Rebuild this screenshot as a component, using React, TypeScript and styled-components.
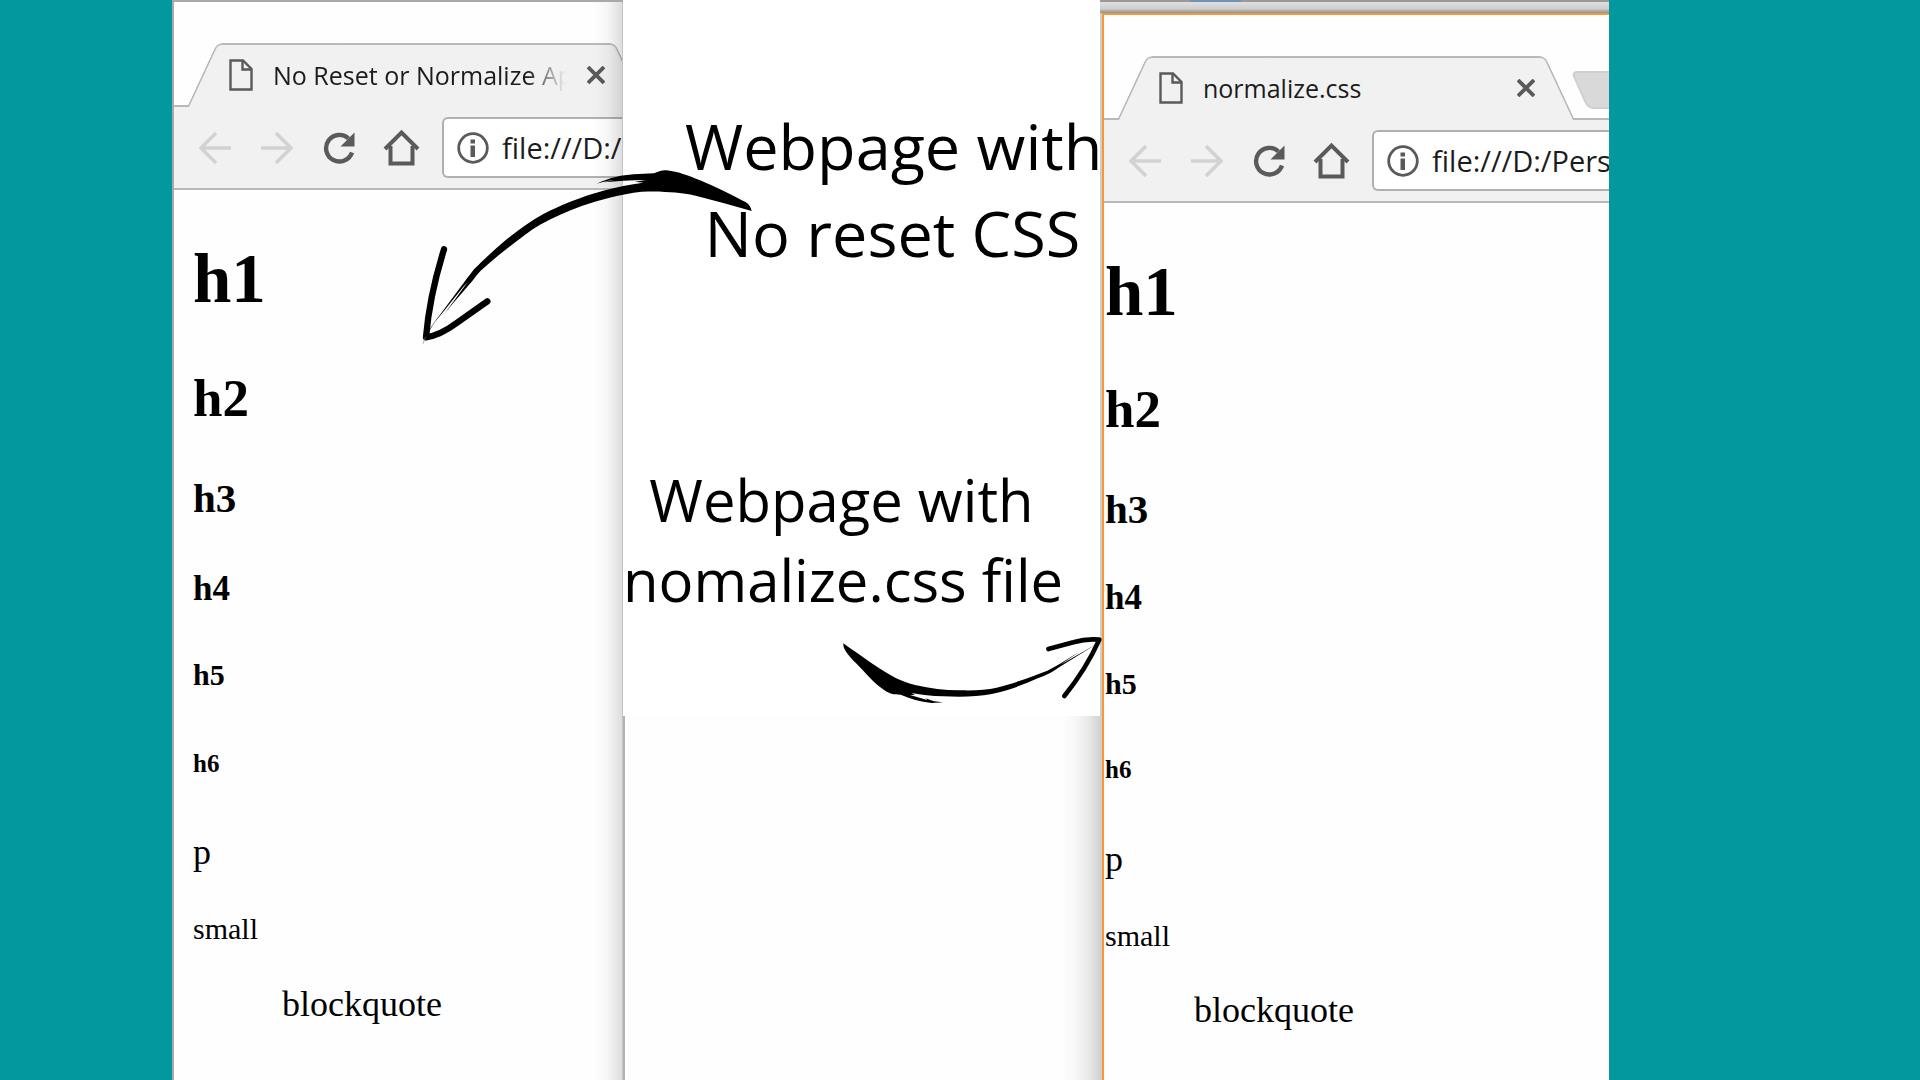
import React from 'react';
import styled, { createGlobalStyle } from 'styled-components';

const GlobalStyle = createGlobalStyle`
  *, *::before, *::after { box-sizing: border-box; }
  body { margin: 0; background: #03989e; }
`;

const uiFont = `'Open Sans', 'Noto Sans', sans-serif`;
const pageFont = `'Liberation Serif', 'Times New Roman', serif`;

const Stage = styled.main`
  display: grid;
  grid-template-columns:
    minmax(0, 172fr) minmax(0, 451fr) minmax(0, 477fr)
    minmax(0, 509fr) minmax(0, 311fr);
  min-height: 100vh;
  background: #03989e;
`;

const LeftPane = styled.section`
  grid-column: 2;
  position: relative;
  display: flex;
  overflow: hidden;
  &::after {
    content: '';
    position: absolute;
    inset: 2px 0 0 auto;
    width: 30px;
    border-right: 1px solid #c4c4c4;
    background: linear-gradient(to right, rgba(0, 0, 0, 0), rgba(0, 0, 0, 0.03) 50%, rgba(0, 0, 0, 0.13));
    pointer-events: none;
  }
`;

const MiddlePane = styled.section`
  grid-column: 3;
  position: relative;
  z-index: 1;
  display: flex;
  flex-direction: column;
`;

const RightPane = styled.section`
  grid-column: 4;
  display: flex;
  flex-direction: column;
  overflow: hidden;
  background: #cdcfd1;
`;

const BackEdge = styled.div`
  height: 13px;
  border-top: 2px solid #999;
  border-image: linear-gradient(to right, #999 91px, #6f93b5 91px, #6f93b5 142px, #999 142px) 2;
  background: linear-gradient(#e0e0e0, #cfcfcf 60%, #8f8f8f);
`;

const FrameHolder = styled.div`
  flex: 1;
  display: flex;
  padding-left: 2px;
`;

const Frame = styled.article<{ $edge: string }>`
  flex: 1;
  min-width: 0;
  overflow: hidden;
  background: #fefefe;
  border: 2px solid ${(p) => p.$edge};
  border-width: 2px 0 0 2px;
`;

const TabStrip = styled.div`
  display: flex;
  height: 105px;
  padding: 41px 0 0 13px;
  border-bottom: 2px solid #b9b9b9;
`;

const Tab = styled.div`
  flex: none;
  position: relative;
  z-index: 0;
  display: flex;
  align-items: center;
  width: 458px;
  height: 64px;
  padding: 0 40px 0 42px;
  &::before,
  &::after {
    content: '';
    position: absolute;
    z-index: -1;
    top: 0;
    bottom: 0;
    background: #f1f1f1;
    border: 2px solid #b9b9b9;
    border-bottom: 0;
  }
  &::before {
    left: 0;
    right: 40%;
    border-right: 0;
    border-top-left-radius: 6px;
    transform: skewX(-25deg);
    transform-origin: bottom left;
  }
  &::after {
    left: 40%;
    right: 0;
    border-left: 0;
    border-top-right-radius: 6px;
    transform: skewX(25deg);
    transform-origin: bottom right;
  }
`;

const TabTitle = styled.span<{ $fade: boolean }>`
  flex: 1;
  min-width: 0;
  margin: 0 20px;
  overflow: hidden;
  white-space: nowrap;
  font: 25px/32px ${uiFont};
  color: #1c1c1c;
  ${(p) => p.$fade && 'mask-image: linear-gradient(to right, #000 255px, rgba(0, 0, 0, 0.1) 288px, transparent 294px);'}
`;

const IconButton = styled.button`
  display: flex;
  padding: 0;
  border: 0;
  background: none;
  color: #5a5a5a;
  &:disabled { color: #d2d2d2; }
`;

const NewTab = styled.button`
  flex: none;
  width: 70px;
  height: 38px;
  margin: 15px 0 0 4px;
  border: 2px solid #cfcfcf;
  border-radius: 6px;
  background: #d9d9d9;
  transform: skewX(24deg);
`;

const Toolbar = styled.div`
  display: flex;
  align-items: center;
  gap: 25px;
  padding: 10px 0 10px 25px;
  background: #f1f1f1;
  border-bottom: 2px solid #b9b9b9;
`;

const Nav = styled.nav`
  display: flex;
  gap: 30px;
`;

const AddressBar = styled.label`
  flex: 1;
  min-width: 0;
  display: flex;
  align-items: center;
  gap: 13px;
  height: 61px;
  padding-left: 13px;
  border: 2px solid #b0b0b0;
  border-right: 0;
  border-radius: 6px 0 0 6px;
  background: #fff;
  color: #5a5a5a;
`;

const Address = styled.input`
  flex: 1;
  min-width: 0;
  height: 40px;
  padding: 0;
  border: 0;
  outline: 0;
  background: none;
  font: 29px/40px ${uiFont};
  color: #1c1c1c;
`;

const Page = styled.div<{ $inset: number }>`
  padding: 49px 0 0 ${(p) => p.$inset}px;
  font-family: ${pageFont};
  color: #000;
`;

const Sample = styled.div<{ $size: number; $line: number; $after: number; $bold: boolean }>`
  margin: 0 0 ${(p) => p.$after}px;
  font-size: ${(p) => p.$size}px;
  line-height: ${(p) => p.$line}px;
  font-weight: ${(p) => (p.$bold ? 700 : 400)};
`;

const SmallLine = styled.small`
  display: block;
  font-size: 30px;
  line-height: 40px;
`;

const Quote = styled.blockquote<{ $before: number }>`
  margin: ${(p) => p.$before}px 0 0 89px;
  font-size: 36px;
  line-height: 40px;
`;

const Notes = styled.div`
  display: flex;
  flex-direction: column;
  gap: 184px;
  padding: 102px 0 96px;
  background: #fff;
`;

const Note = styled.p<{ $size: number; $line: number; $left: number; $right: number }>`
  margin: 0;
  padding: 0 ${(p) => p.$right}px 0 ${(p) => p.$left}px;
  font: ${(p) => p.$size}px/${(p) => p.$line}px ${uiFont};
  color: #000;
  text-align: center;
  white-space: nowrap;
`;

const WindowSlice = styled.div`
  flex: 1;
  border-left: 2px solid #b3b3b3;
  background: linear-gradient(to left, #d2d2d2, #ebebeb 13px, #f8f8f8 26px, #fefefe 38px);
`;

const ArrowDown = styled.svg`
  position: absolute;
  left: -223px;
  top: 150px;
  pointer-events: none;
`;

const ArrowRight = styled.svg`
  position: absolute;
  right: -20px;
  top: 620px;
  pointer-events: none;
`;

const PageIcon = () => (
  <svg width="24" height="32" viewBox="0 0 24 32" fill="none" stroke="#5a5a5a" strokeWidth="2.400" aria-hidden="true">
    <path d="M1.500 1.500H14L22.500 10V30.500H1.500Z" />
    <path d="M13.500 1.500V10.500H22.500" />
  </svg>
);

const CloseIcon = () => (
  <svg width="18" height="18" viewBox="0 0 18 18" fill="none" stroke="currentColor" strokeWidth="3.800" aria-hidden="true">
    <path d="M1 1L17 17M17 1L1 17" />
  </svg>
);

const ArrowIcon = ({ flip }: { flip?: boolean }) => (
  <svg width="32" height="36" viewBox="0 0 32 36" fill="none" stroke="currentColor" strokeWidth="3.600" aria-hidden="true">
    <path d={flip ? 'M0 18H29M15 3L30 18L15 33' : 'M32 18H3M17 3L2 18L17 33'} />
  </svg>
);

const ReloadIcon = () => (
  <svg width="32" height="36" viewBox="0 0 32 36" aria-hidden="true">
    <path d="M25.500 8.500A13.300 13.300 0 1 0 29 22.500" fill="none" stroke="currentColor" strokeWidth="4.400" />
    <path d="M31.500 2.500V16.500H17.500Z" fill="currentColor" />
  </svg>
);

const HomeIcon = () => (
  <svg width="32" height="36" viewBox="0 0 32 36" overflow="visible" fill="none" stroke="currentColor" strokeWidth="4" aria-hidden="true">
    <path d="M0 19L16.500 2.500L33 19" />
    <path d="M5.500 16V33.500H27.500V16" />
  </svg>
);

const InfoIcon = () => (
  <svg width="32" height="32" viewBox="0 0 32 32" aria-hidden="true">
    <circle cx="16" cy="16" r="14.300" fill="none" stroke="currentColor" strokeWidth="2.800" />
    <path d="M13.500 7.500H18V11.500H13.500ZM13.500 13.500H18V25H13.500Z" fill="currentColor" />
  </svg>
);

type BrowserProps = {
  edge: string;
  title: string;
  url: string;
  fade?: boolean;
  inset: number;
  spacing: number[];
};

const samples = [
  { tag: 'h1', size: 69, line: 80 },
  { tag: 'h2', size: 53, line: 60 },
  { tag: 'h3', size: 41, line: 46 },
  { tag: 'h4', size: 35, line: 40 },
  { tag: 'h5', size: 30, line: 34 },
  { tag: 'h6', size: 25, line: 30 },
  { tag: 'p', size: 36, line: 40 },
] as const;

const Browser = ({ edge, title, url, fade = false, inset, spacing }: BrowserProps) => (
  <Frame $edge={edge}>
    <TabStrip>
      <Tab>
        <PageIcon />
        <TabTitle $fade={fade}>{title}</TabTitle>
        <IconButton aria-label="Close tab"><CloseIcon /></IconButton>
      </Tab>
      <NewTab aria-label="New tab" />
    </TabStrip>
    <Toolbar>
      <Nav>
        <IconButton aria-label="Back" disabled><ArrowIcon /></IconButton>
        <IconButton aria-label="Forward" disabled><ArrowIcon flip /></IconButton>
        <IconButton aria-label="Reload"><ReloadIcon /></IconButton>
        <IconButton aria-label="Home"><HomeIcon /></IconButton>
      </Nav>
      <AddressBar>
        <InfoIcon />
        <Address aria-label="Address" defaultValue={url} />
      </AddressBar>
    </Toolbar>
    <Page $inset={inset}>
      {samples.map((s, i) => (
        <Sample key={s.tag} as={s.tag} $size={s.size} $line={s.line} $after={spacing[i]} $bold={s.tag !== 'p'}>
          {s.tag}
        </Sample>
      ))}
      <SmallLine>small</SmallLine>
      <Quote $before={spacing[7]}>blockquote</Quote>
    </Page>
  </Frame>
);

export default function App() {
  return (
    <>
      <GlobalStyle />
      <Stage>
        <LeftPane>
          <Browser
            edge="#a9a9a9"
            title="No Reset or Normalize Ap"
            url="file:///D:/"
            fade
            inset={19}
            spacing={[49, 47, 48, 49, 57, 53, 37, 35]}
          />
        </LeftPane>
        <MiddlePane>
          <Notes>
            <Note $size={63} $line={87} $left={62} $right={0}>Webpage with<br />No reset CSS</Note>
            <Note $size={58} $line={80} $left={0} $right={40}>Webpage with<br />nomalize.css file</Note>
          </Notes>
          <WindowSlice />
          <ArrowDown width="380" height="210" viewBox="0 0 1140 630" aria-hidden="true">
            <path d="M1055 183C1052 170 1045 158 1030 153C985 130 945 109 900 91C868 78 835 65 800 61C785 60 774 65 762 70C720 72 680 73 650 80C628 85 610 91 590 101C608 96 622 92 645 89L612 97C650 93 690 91 738 90L705 95L730 98C690 103 650 111 610 122C540 141 480 166 430 192C390 214 355 240 320 268C285 297 250 330 222 358C208 376 196 392 184 408L120 494C105 512 94 528 86 545L90 540C98 524 110 509 124 493L190 410L203 396L160 455L132 492L165 453L215 395C225 382 233 371 242 362C275 333 300 311 335 285C365 261 390 242 420 224C460 203 500 184 545 168C600 149 660 133 725 125C750 125 770 124 795 126C840 128 865 132 890 138C945 152 1000 168 1055 183Z" />
            <path d="M132 298Q88 440 78 562Q120 556 170 519L262 454" fill="none" stroke="#000" strokeWidth="19" strokeLinecap="round" strokeLinejoin="round" />
            <path d="M69 581L77 560" stroke="#777" strokeWidth="2" />
          </ArrowDown>
          <ArrowRight width="300" height="120" viewBox="0 0 900 360" aria-hidden="true">
            <path d="M70 70C95 88 118 104 140 119C190 154 235 183 285 195C335 206 380 212 425 211C465 212 500 210 530 203C585 190 630 171 682 152L715 134L778 95L720 135L830 72L715 143C695 158 678 165 655 174C610 194 565 212 515 222C470 231 420 231 370 229C335 228 305 224 275 219L285 225L270 225L322 240L318 235C335 243 350 246 370 247L335 249C300 245 270 236 242 224C230 224 220 224 210 220C180 205 155 180 130 152C100 121 67 94 70 70Z" />
            <path d="M685 87L760 67Q800 55 838 59Q798 148 733 228" fill="none" stroke="#000" strokeWidth="14" strokeLinecap="round" strokeLinejoin="round" />
          </ArrowRight>
        </MiddlePane>
        <RightPane>
          <BackEdge />
          <FrameHolder>
            <Browser
              edge="#f79736"
              title="normalize.css"
              url="file:///D:/Pers"
              inset={1}
              spacing={[47, 47, 46, 49, 54, 54, 37, 34]}
            />
          </FrameHolder>
        </RightPane>
      </Stage>
    </>
  );
}
